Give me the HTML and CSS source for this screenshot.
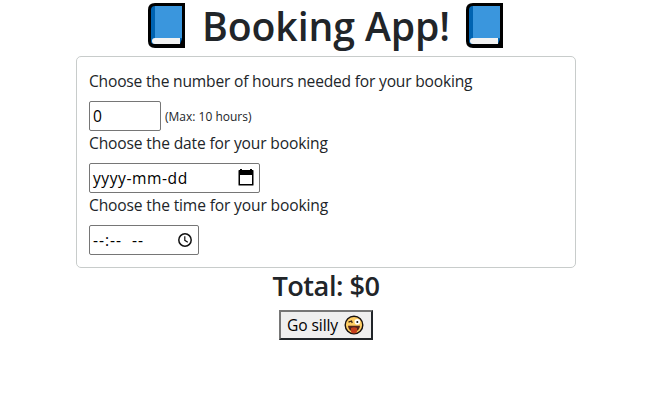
FILE: index.html
```html
<!DOCTYPE html>
<html lang="en">
<head>
<meta charset="utf-8">
<title>Booking App</title>
<link rel="stylesheet" href="styles.css">
</head>
<body>
<svg class="defs" width="0" height="0" aria-hidden="true">
  <symbol id="book" viewBox="0 0 38 46">
    <path fill="#000" d="M7 0H37V45H7Q0 45 0 38V7Q0 0 7 0Z"/>
    <path fill="#0063b1" d="M3 7Q3 3 7 3V35H34V36L32 41H6Q3 41 3 38Z"/>
    <path fill="#3a96dd" d="M7 3H34V35H7Z"/>
    <path fill="#f2f2f2" d="M7 35H32V41H7Q4 41 4 38T7 35Z"/>
  </symbol>
</svg>
<main class="app">
  <h1 class="title">
    <svg class="book"><use href="#book"/></svg>
    <span class="title-text">Booking App!</span>
    <svg class="book"><use href="#book"/></svg>
  </h1>
  <form class="card">
    <label class="label">Choose the number of hours needed for your booking</label>
    <div class="row">
      <span class="field hours">0</span>
      <small class="hint">(Max: 10 hours)</small>
    </div>
    <label class="label">Choose the date for your booking</label>
    <div class="row">
      <span class="field date"><span class="date-text">yyyy-mm-dd</span>
        <svg class="calendar" viewBox="0 0 16 17"><path fill="#000" fill-rule="evenodd" d="M2 0H4V1H12V0H14V1H15Q15.5 1 15.5 2V16Q15.5 16.5 15 16.5H1Q0.5 16.5 0.5 16V2Q0.5 1 1 1H2ZM2 6V15H14V6Z"/></svg>
      </span>
    </div>
    <label class="label">Choose the time for your booking</label>
    <div class="row">
      <span class="field time"><span class="time-text">--:--&nbsp; --</span>
        <svg class="clock" viewBox="0 0 14 14" fill="none" stroke="#111"><circle cx="7" cy="7" r="6.2" stroke-width="1.5"/><path stroke-width="1.2" d="M6.8 3.2V7.3L9.8 9.2"/></svg>
      </span>
    </div>
  </form>
  <h3 class="total">Total: $0</h3>
  <button class="silly" type="button">Go silly
    <svg class="face" viewBox="0 0 20 20">
      <circle cx="10" cy="10" r="8.8" fill="#ffce63" stroke="#17100d" stroke-width="1.4"/>
      <path d="M4.5 7.2L7.5 6L8.2 8" fill="none" stroke="#382315" stroke-width="1.3"/>
      <circle cx="13.3" cy="6.8" r="2.8" fill="#fff"/><circle cx="13.3" cy="6.9" r="1" fill="#111"/>
      <path d="M4 10.7H16Q15.5 16.5 10 16.5T4 10.7Z" fill="#54251c"/>
      <path d="M7 13Q10 11.5 13 13V16Q13 18.5 10 18.5T7 16Z" fill="#c43e1c"/>
    </svg>
  </button>
</main>
</body>
</html>
```
FILE: styles.css
```css
* { box-sizing: border-box; }
body {
  margin: 0;
  background: #fff;
  color: #212529;
  font: 400 15.6px/24px "Open Sans", "Noto Sans", sans-serif;
}
.defs { display: block; height: 0; }
.app {
  width: 500px;
  margin-left: 76px;
  display: flex;
  flex-direction: column;
  align-items: center;
}
h1, h3 { margin: 0; white-space: nowrap; }
.title {
  height: 56px;
  width: 356px;
  display: flex;
  align-items: flex-start;
  justify-content: space-between;
  font-size: 39.2px;
  font-weight: 550;
  line-height: 52px;
}
.book { width: 38px; height: 46px; margin-top: 3px; }
.title-text { letter-spacing: -0.1px; }
.card {
  width: 500px;
  height: 212px;
  padding: 12px;
  border: 1px solid #c8cccb;
  border-radius: 5px;
}
.label { display: block; height: 32px; white-space: nowrap; letter-spacing: -0.2px; }
.label:not(:first-child) { letter-spacing: -0.15px; }
.row { height: 30px; display: flex; align-items: center; }
.field {
  height: 30px;
  display: flex;
  align-items: center;
  padding: 0 3px;
  border: 1px solid #767676;
  border-radius: 2px;
  color: #000;
  white-space: nowrap;
}
.hours { width: 72px; }
.hint { margin-left: 4px; padding-top: 2px; font-size: 12px; }
.date { width: 171px; justify-content: space-between; padding-right: 5px; }
.date-text { letter-spacing: 0.55px; }
.calendar { width: 16px; height: 17px; margin-bottom: 2px; }
.time { width: 110px; justify-content: space-between; padding-right: 6px; }
.time-text { letter-spacing: 0.95px; }
.clock { width: 14px; height: 14px; }
.total {
  height: 42px;
  padding-top: 1px;
  font-size: 27.2px;
  font-weight: 550;
  line-height: 34px;
  letter-spacing: -0.5px;
}
.silly {
  width: 94px;
  height: 30px;
  padding: 0 7px 0 6px;
  display: flex;
  align-items: center;
  justify-content: space-between;
  border: 2px solid;
  border-color: #767676 #212529 #212529 #767676;
  background: #efefef;
  color: #000;
  font: inherit;
  letter-spacing: -0.1px;
  white-space: nowrap;
}
.face { width: 20px; height: 20px; }
```
